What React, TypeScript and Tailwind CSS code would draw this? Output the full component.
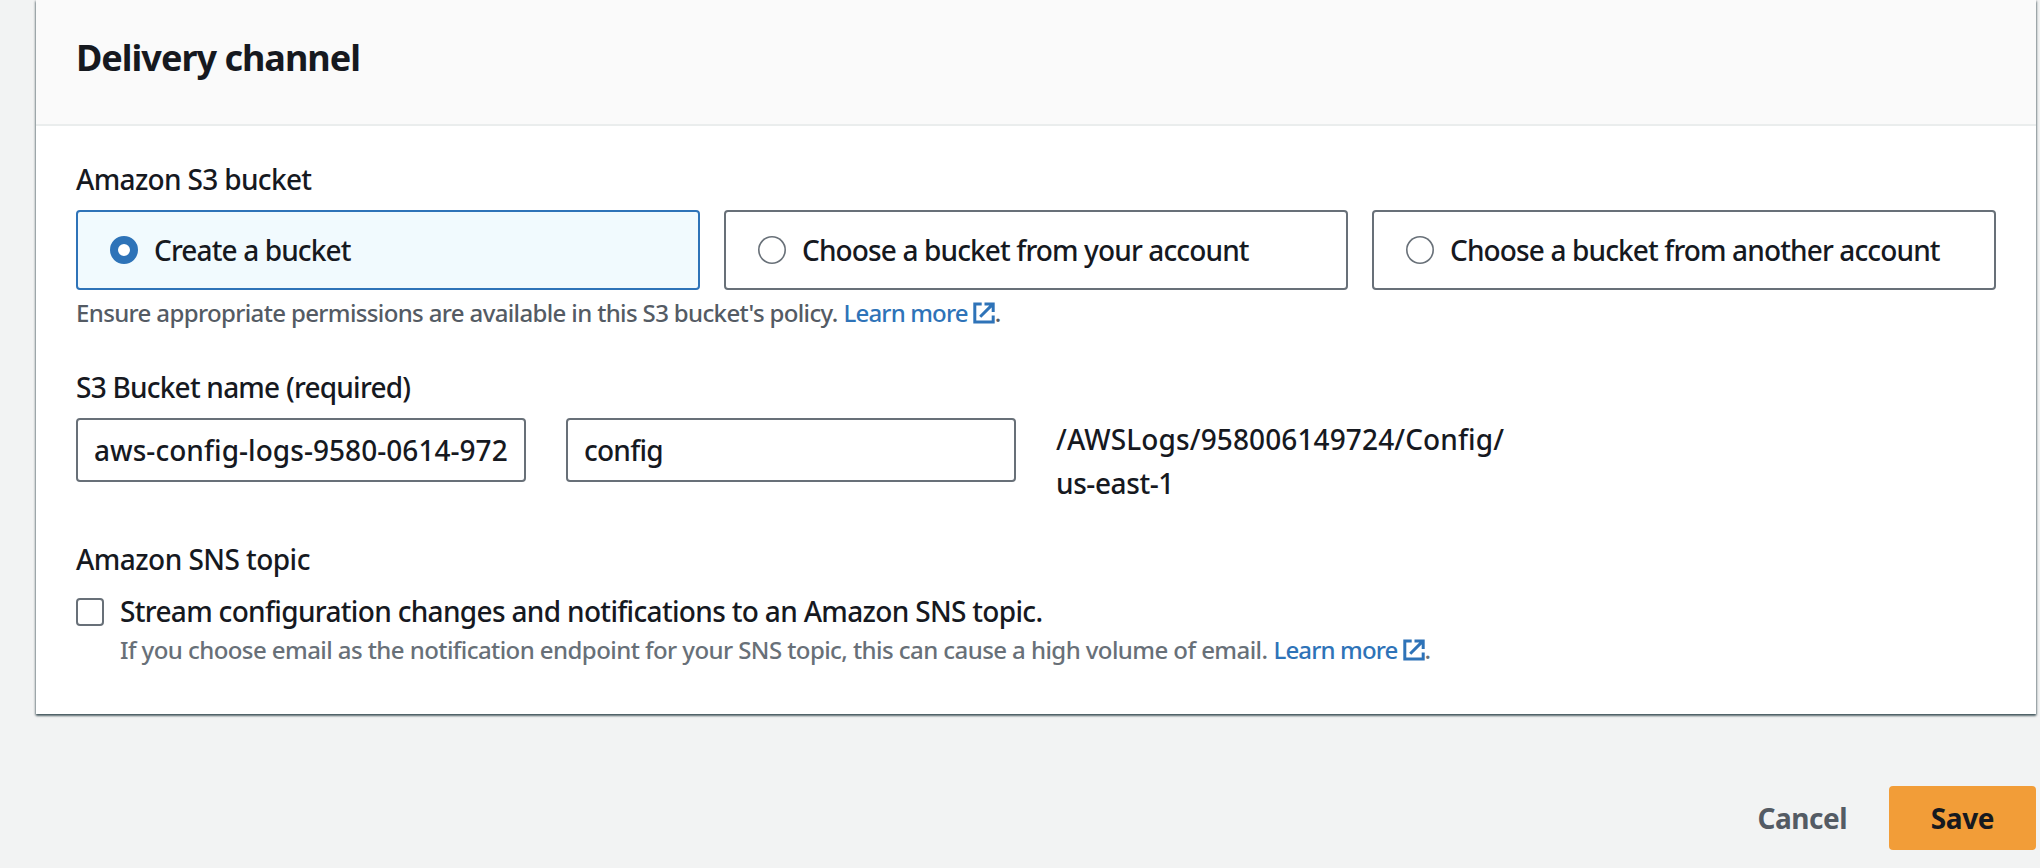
function ExternalIcon() {
  return (
    <svg viewBox="0 0 22 22" className="mt-1 ml-[5px] size-[22px] shrink-0" fill="none" stroke="#2e73b8" strokeWidth="3">
      <path d="M8.7 1.9H1.8v18.2h18.4V13.5" />
      <path d="M11.5 1.9h8.7V10M19.6 2.4 7.2 14.8" />
    </svg>
  );
}

function LearnMore() {
  return (
    <>
      <a className="ml-[6px] tracking-[-0.85px] text-[#2e73b8]">Learn more</a>
      <ExternalIcon />
      <span>.</span>
    </>
  );
}

function Tile({ label, selected = false }: { label: string; selected?: boolean }) {
  return (
    <div
      className={`flex h-20 flex-1 items-center rounded-[4px] border-2 pl-8 ${
        selected ? "border-[#2e73b8] bg-[#f1fafe]" : "border-[#687078] bg-white"
      }`}
    >
      <span
        className={`size-7 shrink-0 rounded-full bg-white ${
          selected ? "border-8 border-[#2e73b8]" : "shadow-[inset_0_0_0_1.6px_#687078]"
        }`}
      />
      <span className="ml-4 pb-px tracking-[-0.87px]">{label}</span>
    </div>
  );
}

export default function App() {
  return (
    <div className="h-[868px] w-[2040px] overflow-hidden bg-[#f2f3f3] pl-9 pr-1 font-['Noto_Sans','Open_Sans',sans-serif] text-[28px] leading-10 font-medium whitespace-nowrap text-[#16191f]">
      <section className="h-[714px] bg-white shadow-[0_2px_2px_0_rgba(0,28,36,0.5),1px_1px_2px_0_rgba(0,28,36,0.3),-1px_1px_2px_0_rgba(0,28,36,0.3)]">
        <header className="h-[126px] border-b-2 border-[#eaeded] bg-[#fafafa] px-10 pt-9">
          <h2 className="text-[36px] leading-[44px] font-bold tracking-[-1px]">Delivery channel</h2>
        </header>

        <div className="px-10 pt-[33px]">
          <div className="tracking-[-0.66px]">Amazon S3 bucket</div>
          <div className="mt-[11px] flex gap-6">
            <Tile label="Create a bucket" selected />
            <Tile label="Choose a bucket from your account" />
            <Tile label="Choose a bucket from another account" />
          </div>
          <div className="mt-2 flex text-2xl leading-[30px] text-[#545b64]">
            <span className="tracking-[-0.64px]">
              Ensure appropriate permissions are available in this S3 bucket's policy.
            </span>
            <LearnMore />
          </div>

          <div className="mt-[39px] tracking-[-0.77px]">S3 Bucket name (required)</div>
          <div className="mt-[10px] flex gap-10">
            <div className="mt-px flex h-16 w-[450px] items-center rounded-[4px] border-2 border-[#687078] pl-4 tracking-[0.05px]">
              aws-config-logs-9580-0614-972
            </div>
            <div className="mt-px flex h-16 w-[450px] items-center rounded-[4px] border-2 border-[#687078] pl-4 tracking-[-0.75px]">
              config
            </div>
            <div className="leading-[44px]">
              <div className="tracking-[0.12px]">/AWSLogs/958006149724/Config/</div>
              <div className="tracking-[-0.4px]">us-east-1</div>
            </div>
          </div>

          <div className="mt-[34px] tracking-[-0.54px]">Amazon SNS topic</div>
          <div className="mt-3 flex">
            <span className="mt-[7px] size-7 shrink-0 rounded-[4px] border-2 border-[#687078] bg-white" />
            <div className="ml-4">
              <div className="tracking-[-0.67px]">
                Stream configuration changes and notifications to an Amazon SNS topic.
              </div>
              <div className="mt-1 flex text-2xl leading-[30px] text-[#687078]">
                <span className="tracking-[-0.57px]">
                  If you choose email as the notification endpoint for your SNS topic, this can cause a high volume of email.
                </span>
                <LearnMore />
              </div>
            </div>
          </div>
        </div>
      </section>

      <footer className="mt-[72px] flex h-16 items-center justify-end font-bold">
        <button className="mr-[42px] pb-px tracking-[-0.5px] text-[#545b64]">Cancel</button>
        <button className="h-16 w-[147px] rounded-[4px] bg-[#f29d38] pb-px tracking-[-0.35px]">Save</button>
      </footer>
    </div>
  );
}
